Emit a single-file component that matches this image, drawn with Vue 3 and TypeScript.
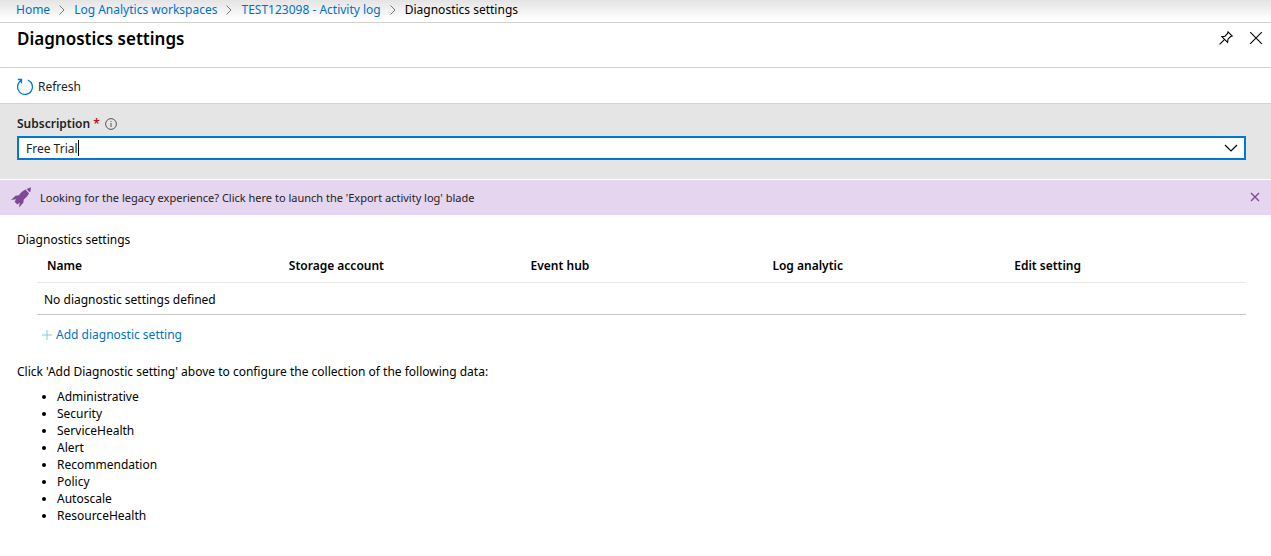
<script setup lang="ts">
import { ref } from 'vue'

interface Crumb {
  label: string
  current?: boolean
}

const crumbs: Crumb[] = [
  { label: 'Home' },
  { label: 'Log Analytics workspaces' },
  { label: 'TEST123098 - Activity log' },
  { label: 'Diagnostics settings', current: true },
]
const columns: string[] = ['Name', 'Storage account', 'Event hub', 'Log analytic', 'Edit setting']
const categories: string[] = [
  'Administrative',
  'Security',
  'ServiceHealth',
  'Alert',
  'Recommendation',
  'Policy',
  'Autoscale',
  'ResourceHealth',
]

const subscription = ref('Free Trial')
const bannerOpen = ref(true)
</script>

<template>
  <div class="blade">
    <nav class="crumbs" aria-label="Breadcrumb">
      <ol>
        <li v-for="crumb in crumbs" :key="crumb.label">
          <span v-if="crumb.current" aria-current="page">{{ crumb.label }}</span>
          <template v-else>
            <a href="#">{{ crumb.label }}</a>
            <svg class="sep" viewBox="0 0 8 10" aria-hidden="true"><path d="M1.5 0.5 6 5 1.5 9.5" /></svg>
          </template>
        </li>
      </ol>
    </nav>

    <header class="title-bar">
      <h1>Diagnostics settings</h1>
      <div class="actions">
        <button type="button" aria-label="Pin to dashboard">
          <svg viewBox="0 0 16 16" aria-hidden="true">
            <path d="M10 1.800 14.200 6 12.700 6.500 10 9.200 9.600 12.400 3.800 6.700 7 6.200 9.600 3.400zM6.200 9.800 1.600 14.400" />
          </svg>
        </button>
        <button type="button" aria-label="Close">
          <svg viewBox="0 0 16 16" aria-hidden="true"><path d="M2.2 2.2 13.8 13.8M13.8 2.2 2.2 13.8" /></svg>
        </button>
      </div>
    </header>

    <div class="toolbar">
      <button type="button" class="refresh">
        <svg viewBox="0 0 18 18" aria-hidden="true">
          <path d="M11.8 2A7.5 7.5 0 1 1 5.2 2.5M1.8 1.5H5.5V5.2" />
        </svg>
        Refresh
      </button>
    </div>

    <section class="filter">
      <div class="label-row">
        <label for="subscription">Subscription <span class="required">*</span></label>
        <svg class="info" viewBox="0 0 12 12" aria-hidden="true">
          <circle cx="6" cy="6" r="5.4" />
          <path d="M6 5V9M6 3V4" />
        </svg>
      </div>
      <div class="combo">
        <input id="subscription" v-model="subscription" type="text" role="combobox" aria-expanded="false" required />
        <span class="caret" aria-hidden="true"></span>
        <button type="button" aria-label="Show subscriptions">
          <svg viewBox="0 0 14 8" aria-hidden="true"><path d="M1 1 7 7 13 1" /></svg>
        </button>
      </div>
    </section>

    <div v-if="bannerOpen" class="banner">
      <a href="#">
        <svg viewBox="0 0 22 22" aria-hidden="true">
          <path d="M15.6 2.9 20 1.200 19.400 5.700 18.300 6z" />
          <path d="M14.400 3.600C11.500 5 9.500 7 8 9.200L4.500 9.700 0 14 5.200 13.200 3.600 15.800 6.300 18.400 8.700 16.700 8 21.500 12.300 16.800 12.800 13.600C15.200 11.600 17.200 9.300 18 7.200z" />
        </svg>
        <span>Looking for the legacy experience? Click here to launch the 'Export activity log' blade</span>
      </a>
      <button type="button" aria-label="Dismiss" @click="bannerOpen = false">
        <svg viewBox="0 0 10 10" aria-hidden="true"><path d="M1 1 9 9M9 1 1 9" /></svg>
      </button>
    </div>

    <main>
      <h2>Diagnostics settings</h2>
      <div class="settings">
        <table>
          <thead>
            <tr>
              <th v-for="column in columns" :key="column" scope="col">{{ column }}</th>
            </tr>
          </thead>
          <tbody>
            <tr>
              <td :colspan="columns.length">No diagnostic settings defined</td>
            </tr>
          </tbody>
        </table>
        <a class="add" href="#">
          <svg viewBox="0 0 10 10" aria-hidden="true"><path d="M5 0V10M0 5H10" /></svg>
          Add diagnostic setting
        </a>
      </div>
      <p>Click 'Add Diagnostic setting' above to configure the collection of the following data:</p>
      <ul>
        <li v-for="category in categories" :key="category">{{ category }}</li>
      </ul>
    </main>
  </div>
</template>

<style>
body {
  background: #fff;
}
</style>

<style scoped>
.blade {
  font-family: 'Segoe UI', 'Noto Sans', 'Open Sans', sans-serif;
  font-size: 12px;
  line-height: 17px;
  color: #000;
}

a {
  color: #0072c6;
  text-decoration: none;
}

button {
  display: flex;
  align-items: center;
  padding: 0;
  border: 0;
  background: none;
  font: inherit;
  color: inherit;
  cursor: pointer;
}

svg {
  flex: none;
  fill: none;
  stroke: currentColor;
}

.crumbs {
  padding: 1px 16px 4px;
  border-bottom: 1px solid #d2d2d2;
  background: linear-gradient(#e4e4e4, #fff 20px);
}

.crumbs ol {
  display: flex;
  margin: 0;
  padding: 0;
  list-style: none;
}

.crumbs li {
  display: flex;
  align-items: center;
}

.sep {
  width: 8px;
  height: 10px;
  margin: 0 8px;
  color: #777;
}

.title-bar {
  display: flex;
  justify-content: space-between;
  align-items: flex-start;
  padding: 4px 7px 16px 17px;
  border-bottom: 1px solid #d2d2d2;
}

h1 {
  margin: 0;
  font-size: 17px;
  font-weight: 600;
  line-height: 24px;
}

.actions {
  display: flex;
  gap: 14px;
  padding-top: 3px;
}

.actions svg {
  width: 16px;
  height: 16px;
  stroke-width: 1.1;
}

.toolbar {
  padding: 10px 16px 7px;
  border-bottom: 1px solid #d2d2d2;
}

.refresh {
  gap: 4px;
  line-height: 18px;
  color: #222;
}

.refresh svg {
  width: 18px;
  height: 18px;
  color: #0078d4;
  stroke-width: 1.3;
}

.filter {
  padding: 11px 25px 19px 17px;
  background: #e5e5e5;
}

.label-row {
  display: flex;
  align-items: center;
  gap: 5px;
  margin-bottom: 4px;
  font-weight: 600;
  color: #222;
}

.required {
  color: #b5121b;
}

.info {
  width: 12px;
  height: 12px;
  color: #555;
}

.combo {
  display: flex;
  align-items: center;
  padding: 0 6px 0 7px;
  border: 2px solid #0078d4;
  background: #fff;
}

.combo input {
  field-sizing: content;
  padding: 1px 0 0;
  border: 0;
  outline: 0;
  background: none;
  font: inherit;
  line-height: 19px;
  color: #222;
}

.caret {
  width: 1px;
  height: 16px;
  background: #000;
}

.combo button {
  margin-left: auto;
}

.combo svg {
  width: 14px;
  height: 8px;
  stroke-width: 1.2;
}

.banner {
  display: flex;
  align-items: center;
  justify-content: space-between;
  margin-top: 1px;
  padding: 6px 11px 7px;
  background: #e5d5ee;
}

.banner a {
  display: flex;
  align-items: center;
  gap: 7px;
  font-size: 11px;
  color: #222;
}

.banner a svg {
  width: 22px;
  height: 22px;
  fill: #804998;
  stroke: none;
}

.banner button svg {
  width: 10px;
  height: 10px;
  color: #804998;
  stroke-width: 1.4;
}

main {
  padding: 16px 25px 16px 17px;
}

h2 {
  margin: 0;
  font-size: 12px;
  font-weight: 400;
}

.settings {
  padding-left: 20px;
}

table {
  width: 100%;
  table-layout: fixed;
  border-collapse: collapse;
}

th {
  padding: 9px 10px 8px;
  border-bottom: 1px solid #e8e8e8;
  font-weight: 600;
  text-align: left;
}

td {
  padding: 8px 7px 6px;
  border-bottom: 1px solid #c8c8c8;
}

.add {
  display: inline-flex;
  align-items: center;
  gap: 4px;
  margin-top: 11px;
  padding-left: 5px;
}

.add svg {
  width: 10px;
  height: 10px;
  color: #8cc8dc;
}

p {
  margin: 19px 0 8px;
}

ul {
  margin: 0;
  padding-left: 40px;
}
</style>
